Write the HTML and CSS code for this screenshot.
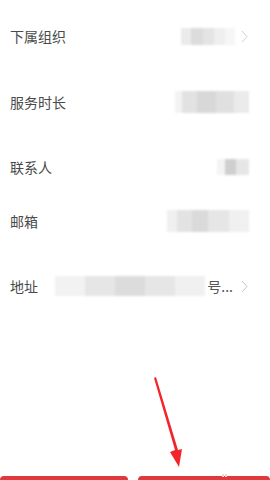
FILE: index.html
```html
<!DOCTYPE html>
<html lang="zh-CN">
<head>
  <meta charset="UTF-8">
  <meta name="viewport" content="width=device-width, initial-scale=1.0">
  <title>机构信息</title>
  <link rel="stylesheet" href="styles.css">
</head>
<body>
  <main class="info">
    <div class="row row-org">
      <span class="label">下属组织</span>
      <span class="value">
        <span class="blur blur-org"></span>
        <svg class="chev" width="7" height="13" viewBox="0 0 7 13" aria-hidden="true"><path d="M1 1 L6 6.5 L1 12" fill="none" stroke="#d0d0d0" stroke-width="1"/></svg>
      </span>
    </div>
    <div class="row row-time">
      <span class="label">服务时长</span>
      <span class="value"><span class="blur blur-time"></span></span>
    </div>
    <div class="row row-contact">
      <span class="label">联系人</span>
      <span class="value"><span class="blur blur-contact"></span></span>
    </div>
    <div class="row row-mail">
      <span class="label">邮箱</span>
      <span class="value"><span class="blur blur-mail"></span></span>
    </div>
    <div class="row row-addr">
      <span class="label">地址</span>
      <span class="value addr">
        <span class="blur blur-addr"></span>
        <span class="tail">号...</span>
        <svg class="chev" width="7" height="13" viewBox="0 0 7 13" aria-hidden="true"><path d="M1 1 L6 6.5 L1 12" fill="none" stroke="#c4c4c4" stroke-width="1"/></svg>
      </span>
    </div>
  </main>

  <footer class="actions">
    <button class="btn btn-left" type="button"></button>
    <button class="btn btn-right" type="button"><span class="dots"></span></button>
  </footer>

  <svg class="arrow" width="60" height="110" viewBox="0 0 60 110" aria-hidden="true">
    <path d="M13 6 L34 78 L29 80 L38 95 L41 77 L37 78 L15 5 Z" fill="#f2262a"/>
  </svg>
</body>
</html>
```

FILE: styles.css
```css
html,
body {
  margin: 0;
  height: 100%;
}

body {
  background: #fff;
  font-family: "Noto Sans CJK SC", "Noto Sans", sans-serif;
  color: #4a4a4a;
  display: flex;
  flex-direction: column;
  position: relative;
  overflow: hidden;
}

.info {
  flex: 1;
  padding-block-start: 26px;
}

.row {
  display: flex;
  align-items: center;
  justify-content: space-between;
  padding-inline: 10px 22px;
  height: 20px;
}

.row-time { margin-block-start: 46px; }
.row-contact { margin-block-start: 45px; }
.row-mail { margin-block-start: 34px; }
.row-addr { margin-block-start: 45px; }

.label {
  font-size: 14px;
  line-height: 20px;
  white-space: nowrap;
}

.value {
  display: flex;
  align-items: center;
  gap: 4px;
}

.chev {
  display: block;
  margin-inline-start: 2px;
}

.blur {
  display: block;
  filter: blur(1.2px);
  background:
    linear-gradient(90deg, #ebebeb 0 18%, #dcdcdc 18% 40%, #e4e4e4 40% 62%, #efefef 62% 82%, #f6f6f6 82%);
}

.blur-org {
  width: 54px;
  height: 17px;
}

.blur-time {
  width: 74px;
  height: 22px;
  margin-inline-end: -1px;
  background:
    linear-gradient(90deg, #f3f3f3 0 10%, #e2e2e2 10% 30%, #d8d8d8 30% 55%, #e0e0e0 55% 80%, #ebebeb 80%);
}

.blur-contact {
  width: 32px;
  height: 16px;
  margin-inline-end: -1px;
  background:
    linear-gradient(90deg, #f4f4f4 0 25%, #cfcfcf 25% 60%, #e6e6e6 60%);
}

.blur-mail {
  width: 82px;
  height: 22px;
  margin-inline-end: -1px;
  background:
    linear-gradient(90deg, #f0f0f0 0 12%, #e3e3e3 12% 30%, #dadada 30% 50%, #e6e6e6 50% 75%, #f0f0f0 75%);
}

.addr {
  gap: 2px;
}

.blur-addr {
  width: 150px;
  height: 20px;
  background:
    linear-gradient(90deg, #f2f2f2 0 20%, #e6e6e6 20% 40%, #dcdcdc 40% 60%, #e6e6e6 60% 80%, #f0f0f0 80%);
}

.tail {
  font-size: 14px;
  line-height: 20px;
  color: #555;
  margin-inline-end: 4px;
}

.actions {
  display: flex;
  gap: 10px;
  height: 4px;
}

.btn {
  border: 0;
  padding: 0;
  background: #e0393b;
  border-radius: 4px 4px 0 0;
  position: relative;
}

.btn-left {
  width: 128px;
}

.btn-right {
  flex: 1;
}

.dots {
  position: absolute;
  left: 84px;
  top: -2px;
  width: 5px;
  height: 3px;
  background: linear-gradient(90deg, #f3d4d4 0 40%, transparent 40% 60%, #f3d4d4 60%);
}

.arrow {
  position: absolute;
  left: 141px;
  top: 372px;
}
```
